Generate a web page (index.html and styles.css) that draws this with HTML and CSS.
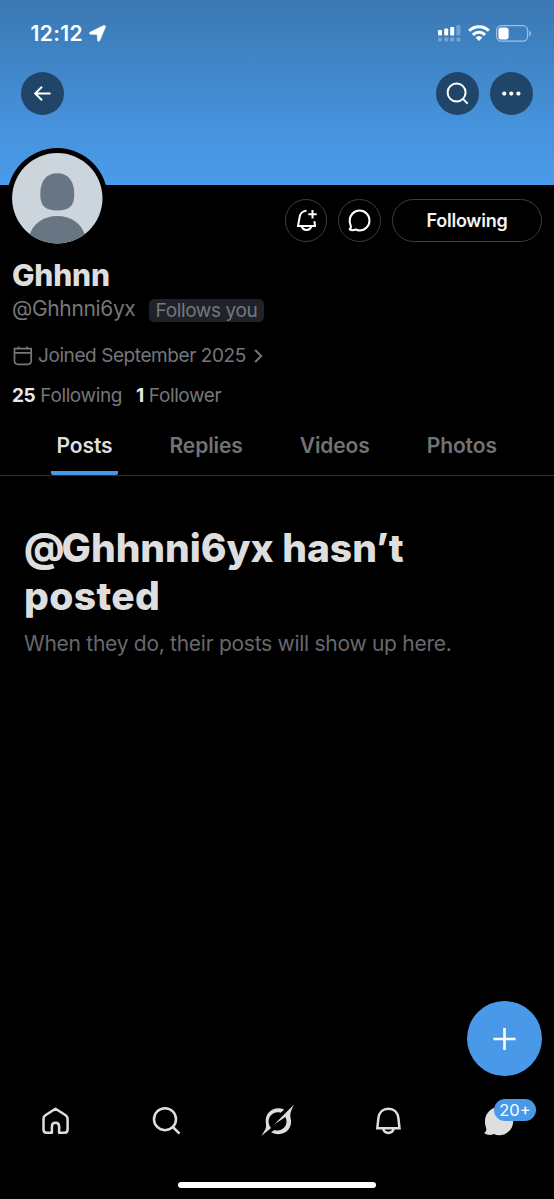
FILE: index.html
```html
<!DOCTYPE html>
<html lang="en">
<head>
<meta charset="utf-8">
<title>Profile</title>
<link rel="stylesheet" href="styles.css">
</head>
<body>
<div class="screen">
  <header class="banner">
    <div class="status">
      <span class="time">12:12</span>
      <svg class="locate" width="17" height="17" viewBox="0 0 17 17"><path d="M1.200 7.100 14.600.6c1.300-.6 2.300.4 1.800 1.700L10.800 15.600c-.5 1.200-2.200 1-2.300-.4L8.200 9.600 1.600 9.300C.2 9.200 0 7.700 1.200 7.100z" fill="#fff" stroke="#fff" stroke-width=".5"/></svg>
      <svg class="signal" width="23" height="18" viewBox="0 0 23 18"><g fill="#fff"><rect x="0" y="6" width="4" height="5.500" rx="1"/><rect x="6.200" y="4.600" width="4" height="6.900" rx="1"/><rect x="12.200" y="3" width="4" height="8.500" rx="1"/></g><g fill="#fff" opacity=".28"><rect x="18.400" y="1" width="4" height="10.500" rx="1"/><rect x="0" y="13.500" width="4" height="4" rx="1"/><rect x="6.200" y="13.500" width="4" height="4" rx="1"/><rect x="12.200" y="13.500" width="4" height="4" rx="1"/><rect x="18.400" y="13.500" width="4" height="4" rx="1"/></g></svg>
      <svg class="wifi" width="22" height="16" viewBox="0 0 22 16"><g fill="none" stroke="#fff" stroke-width="3"><path d="M1.200 5.800a14 14 0 0 1 19.600 0"/><path d="M4.900 9.800a8.800 8.800 0 0 1 12.200 0"/></g><path d="M7.600 12.600a5 5 0 0 1 6.800 0L11 16z" fill="#fff"/></svg>
      <svg class="battery" width="36" height="17" viewBox="0 0 36 17"><rect x=".6" y=".6" width="31" height="15.600" rx="4.600" fill="none" stroke="#fff" stroke-opacity=".5" stroke-width="1.200"/><rect x="2.400" y="2.400" width="10.200" height="12" rx="2.600" fill="#fff"/><path d="M33.300 5.600c2.200.8 2.200 4.800 0 5.600z" fill="#fff" fill-opacity=".5"/></svg>
    </div>
    <nav class="topnav">
      <span class="round"><svg width="43" height="43" viewBox="0 0 43 43"><path d="M29.500 21.500H14.500M21 14.700l-6.800 6.800 6.800 6.800" fill="none" stroke="#fff" stroke-width="2"/></svg></span>
      <span class="round push"><svg width="43" height="43" viewBox="0 0 43 43"><circle cx="20.600" cy="20.500" r="9" fill="none" stroke="#fff" stroke-width="2"/><path d="M26.900 26.900l4.700 4.700" stroke="#fff" stroke-width="2"/></svg></span>
      <span class="round"><svg width="43" height="43" viewBox="0 0 43 43" fill="#fff"><circle cx="14.200" cy="21.600" r="2.100"/><circle cx="21.300" cy="21.600" r="2.100"/><circle cx="28.400" cy="21.600" r="2.100"/></svg></span>
    </nav>
  </header>

  <section class="profile">
    <div class="avatar-row">
      <svg class="avatar" width="101" height="101" viewBox="0 0 101 101">
        <defs><clipPath id="face"><circle cx="50.300" cy="50.300" r="45.200"/></clipPath></defs>
        <circle cx="50.300" cy="50.300" r="50.200"/>
        <g clip-path="url(#face)"><rect width="101" height="101" fill="#cdd5dc"/><path d="M50.300 25.200c11 0 17 7.500 17 21 0 12-5 16.200-17 16.200s-17-4.200-17-16.200c0-13.500 6-21 17-21zM50.300 68.100c14 0 24.500 7.500 28.300 20.500V101H22V88.600C25.800 75.600 36.300 68.100 50.300 68.100z" fill="#687684"/></g>
      </svg>
      <div class="actions">
        <span class="outline circle"><svg width="41" height="41" viewBox="0 0 41 41" fill="none" stroke="#fff" stroke-width="2"><path d="M20.500 10.800c-4.100.3-6.800 3.300-7 7.200L12 26h17l-.6-4.800M15.700 26c.8 5.200 8.800 5.200 9.600 0M26.500 10v8.400M22.300 14.200h8.400"/></svg></span>
        <span class="outline circle"><svg width="41" height="41" viewBox="0 0 41 41" fill="none" stroke="#fff" stroke-width="2" stroke-linejoin="round"><path d="M10.700 29.300c1.500-1.300 1.400-2.900.8-4.500-.6-1.300-.8-2.800-.8-4.300a9.900 9.900 0 1 1 9.900 9.900c-1.500 0-2.900-.3-4.100-.9-1.900.9-4.200.8-5.800-.2z"/></svg></span>
        <span class="outline follow">Following</span>
      </div>
    </div>
    <h1 class="name">Ghhnn</h1>
    <div class="handle-row"><span class="handle">@Ghhnni6yx</span><span class="chip">Follows you</span></div>
    <div class="joined">
      <svg width="20" height="20" viewBox="0 0 20 20" fill="none" stroke="#74777b" stroke-width="1.700"><path d="M1.500 2.700h16.700v12.100q0 3.500-3.500 3.500H5q-3.500 0-3.500-3.500zM1.500 6.900h16.700M5.600.4v2.300M14.100.4v2.300"/></svg>
      <span class="joined-text">Joined September 2025</span>
      <svg class="chevron" width="9" height="14" viewBox="0 0 9 14"><path d="M1.200 1l6 6-6 6" fill="none" stroke="#74777b" stroke-width="2"/></svg>
    </div>
    <div class="counts"><span class="count"><b>25</b> Following</span><span class="count"><b>1</b> Follower</span></div>
  </section>

  <nav class="tabs">
    <span class="tab active">Posts</span><span class="tab">Replies</span><span class="tab">Videos</span><span class="tab">Photos</span>
  </nav>

  <main class="empty">
    <h2 class="empty-title"><span class="at">@</span>Ghhnni6yx hasn’t<br><span class="wide">posted</span></h2>
    <p class="empty-text">When they do, their posts will show up here.</p>
  </main>

  <div class="compose"><svg width="24" height="24" viewBox="0 0 24 24"><path d="M11.500 1v22M.5 12h22" stroke="#fff" stroke-width="2.600"/></svg></div>

  <footer class="bottom">
    <svg width="36" height="36" viewBox="0 0 36 36" fill="none" stroke="#dedede" stroke-width="2.500" stroke-linejoin="round"><path d="M17.500 5.800l10.200 6.500q1.900 1.300 1.900 3.600v10.600q0 3.300-3.300 3.300h-5.200v-6.400c0-4.800-7.200-4.800-7.200 0v6.400H8.800q-3.300 0-3.300-3.300V15.900q0-2.300 1.900-3.600z"/></svg>
    <svg width="36" height="36" viewBox="0 0 36 36" fill="none" stroke="#dedede" stroke-width="2.500"><circle cx="16" cy="16.200" r="11"/><path d="M23.800 24l6.700 6.700"/></svg>
    <svg width="36" height="36" viewBox="0 0 36 36" fill="#dedede"><path d="M24.200 6.600C14.800 2.300 5.400 8.800 5.700 18c.1 3.700 1 5.300-.3 8.200L1.300 33l9.800-7.900C7.700 21 7.900 15.700 11 12.300c2.700-2.900 6.300-3.700 9.600-2.600zM34 1.400L14.200 21.500 25.400 14c2 4 1.200 8-1.200 10.600-2.900 3-6.600 3.600-9.800 2.300l-3.300 2.300c6.400 3.600 13.400 1.800 17-2.200 2.900-3.300 3.600-7.800 2.500-12-.6-3.400-.4-6.200 3.400-13.600z"/></svg>
    <svg width="36" height="36" viewBox="0 0 36 36" fill="none" stroke="#dedede" stroke-width="2.500"><path d="M7.300 25.300l1.100-10.100c.7-6.100 4.700-9.500 10-9.500s9.300 3.400 10 9.500l1.100 10.100zM13.100 25.600c1.200 5.700 9.400 5.700 10.600 0"/></svg>
    <div class="messages">
      <svg width="36" height="36" viewBox="0 0 36 36" fill="#dedede"><path d="M3.600 29.600c2-1.700 2-3.200 1.300-5.300-.6-1.900-.9-3.600-.9-5.400a14.100 14.100 0 1 1 14.200 13.300c-1.900 0-3.700-.4-5.300-1.200-3.200 1.400-6.600 1.100-9.300-.4z"/></svg>
      <span class="badge">20+</span>
    </div>
  </footer>
  <div class="home-bar"></div>
</div>
</body>
</html>
```
FILE: styles.css
```css
* { box-sizing: border-box; }
body { margin: 0; background: #000; font-family: Inter, "Liberation Sans", sans-serif; color: #dedede; }
svg { display: block; flex: none; }
.screen { position: relative; width: 554px; height: 1199px; overflow: hidden; background: #000; display: flex; flex-direction: column; }
.banner { height: 184.500px; flex: none; background: linear-gradient(#3a78b2 0, #4692dc 124px, #4a9bea 184px); }
.status { height: 72px; padding: 0 22px 0 30.500px; display: flex; align-items: flex-start; color: #fff; }
.time { font-size: 21px; font-weight: 600; line-height: 24px; margin-top: 22px; width: 53.500px; letter-spacing: .35px; white-space: nowrap; }
.locate { margin: 25px 0 0 5px; }
.signal { margin: 24px 0 0 auto; }
.wifi { margin: 25px 0 0 7px; }
.battery { margin: 25px 0 0 6px; }
.topnav { display: flex; gap: 11px; padding: 0 21.500px 0 21.400px; }
.round { width: 43px; height: 43px; border-radius: 50%; background: #204568; }
.push { margin-left: auto; }
.profile { padding: 0 12px; height: 226px; flex: none; }
.avatar-row { height: 73px; display: flex; align-items: flex-start; justify-content: space-between; }
.avatar { margin: -36.500px 0 0 -5px; position: relative; }
.actions { display: flex; gap: 11px; padding-top: 14.500px; }
.outline { border: 1px solid #3b3d40; border-radius: 22px; height: 43px; }
.circle { width: 42.600px; }
.follow { width: 150px; text-align: center; font-size: 18px; font-weight: 600; line-height: 41px; letter-spacing: -.25px; color: #f5f5f5; }
.name { margin: 0; font-size: 30px; line-height: 34px; font-weight: 800; letter-spacing: -.2px; }
.handle-row { display: flex; align-items: flex-start; gap: 14px; height: 46px; color: #74777b; padding-top: 4px; }
.handle { font-size: 21px; line-height: 26px; width: 123px; white-space: nowrap; letter-spacing: -.35px; }
.chip { margin-top: 3px; width: 115px; height: 23px; border-radius: 5px; background: #202229; text-align: center; font-size: 19px; line-height: 23px; white-space: nowrap; letter-spacing: -.38px; }
.joined { display: flex; align-items: center; height: 36px; color: #74777b; font-size: 19px; letter-spacing: -.42px; }
.joined svg { margin-left: 1px; }
.joined-text { margin-left: 5px; width: 207px; white-space: nowrap; }
.joined .chevron { margin-left: 9px; }
.counts { display: flex; gap: 14px; height: 37px; align-items: center; padding-top: 7px; color: #74777b; font-size: 19px; letter-spacing: -.38px; }
.count { white-space: nowrap; }
.count b { color: #e8e8e8; font-weight: 700; }
.tabs { display: flex; flex: none; height: 65.500px; padding-left: 51px; gap: 46px; border-bottom: 1px solid #2b2d2f; color: #717376; font-size: 21px; font-weight: 600; line-height: 26px; letter-spacing: -.1px; }
.tab { padding: 22px 5.500px 0; height: 64.500px; }
.active { color: #dedede; background: linear-gradient(#4a99e9, #4a99e9) 0 100% / 100% 4px no-repeat; border-radius: 2px; }
.empty { padding: 48px 24px 0; }
.empty-title { margin: 0; font-size: 39px; line-height: 48px; font-weight: 800; letter-spacing: -.05px; white-space: nowrap; }
.at { letter-spacing: -2.800px; }
.wide { letter-spacing: .35px; }
.empty-text { margin: 10px 0 0; color: #67696c; font-size: 21px; line-height: 28px; white-space: nowrap; letter-spacing: -.27px; }
.compose { position: absolute; right: 12px; bottom: 123px; width: 75px; height: 75px; border-radius: 50%; background: #4a99e9; display: flex; align-items: center; justify-content: center; }
.bottom { margin-top: auto; height: 79px; flex: none; display: flex; justify-content: space-between; padding: 0 37px 0 38px; }
.messages { position: relative; }
.messages > svg { width: 36px; height: 36px; }
.badge { position: absolute; left: 13px; top: -4px; width: 42px; height: 22px; border-radius: 11px; background: #4a99e9; color: #fff; font-size: 16.500px; line-height: 22px; text-align: center; }
.home-bar { flex: none; width: 198px; height: 6px; margin: 0 auto 11px; border-radius: 3px; background: #fff; }
```
